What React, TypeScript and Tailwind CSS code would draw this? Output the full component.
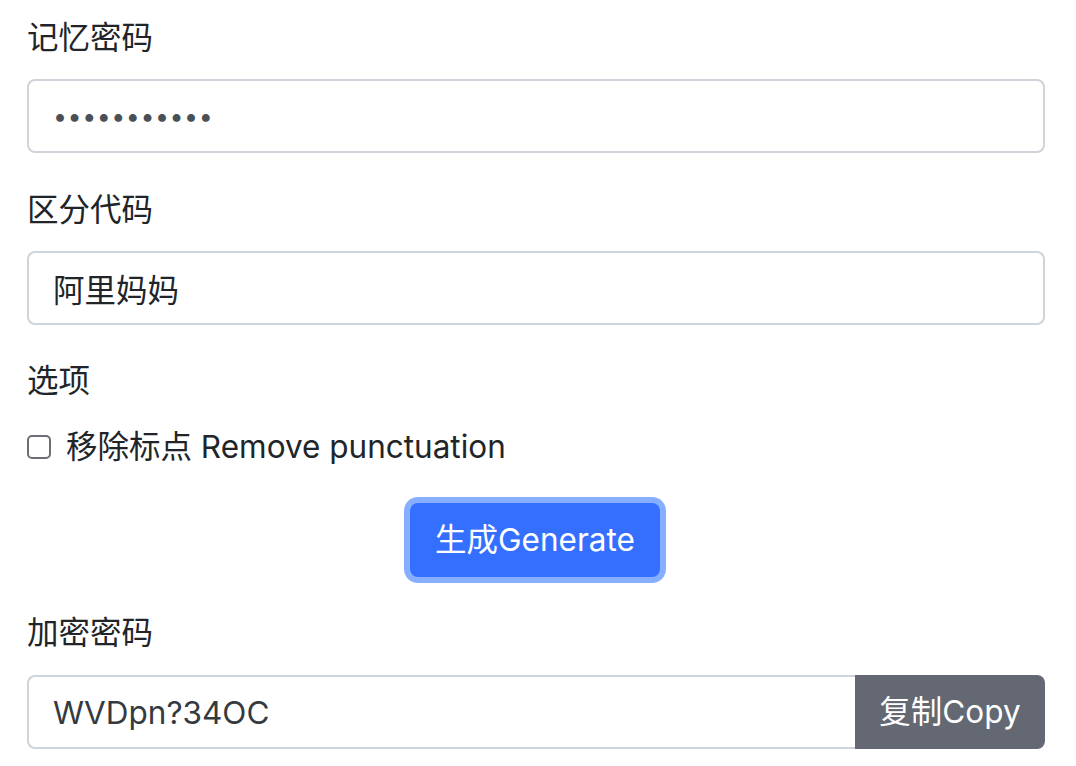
import { useState } from 'react';

const font = { fontFamily: 'Inter, "Noto Sans CJK SC", sans-serif' };

export default function App() {
  const [strip, setStrip] = useState(false);

  return (
    <div className="w-[1076px] h-[766px] bg-white text-[#212529] overflow-hidden" style={font}>
      <div className="ml-[27px] w-[1018px] pt-[15px] text-[31.5px]">
        {/* 记忆密码 */}
        <label className="block h-[46px] leading-[46px] mb-[18px]">记忆密码</label>
        <input
          type="password"
          readOnly
          defaultValue="abcdefghijk"
          className="block w-full h-[74px] px-[24px] border-2 border-[#ced4da] rounded-[8px] text-[25px] text-[#495057] tracking-[0.5px] outline-none"
        />

        {/* 区分代码 */}
        <label className="block h-[46px] leading-[46px] mt-[34px] mb-[18px]">区分代码</label>
        <input
          type="text"
          readOnly
          defaultValue="阿里妈妈"
          className="block w-full h-[74px] px-[24px] border-2 border-[#ced4da] rounded-[8px] text-[31.5px] text-[#212529] outline-none"
        />

        {/* 选项 */}
        <div className="h-[46px] leading-[46px] mt-[33px]">选项</div>
        <label
          className="flex items-center gap-[15px] h-[46px] mt-[20px] cursor-pointer"
          onClick={() => setStrip(!strip)}
        >
          <span className="w-[24px] h-[24px] border-2 border-[#6b6f74] rounded-[5px] bg-white shrink-0" />
          <span>移除标点 Remove punctuation</span>
        </label>

        <div className="flex justify-center mt-[27px]">
          <div className="p-[6px] rounded-[14px] bg-[#86b0ff] ml-[-2px]">
            <button className="h-[74px] w-[250px] rounded-[8px] bg-[#356fff] text-white text-[31.5px]">
              生成Generate
            </button>
          </div>
        </div>

        {/* 加密密码 */}
        <label className="block h-[46px] leading-[46px] mt-[27px] mb-[19px]">加密密码</label>
        <div className="flex h-[74px]">
          <input
            type="text"
            readOnly
            defaultValue="WVDpn?34OC"
            className="flex-1 min-w-0 h-full px-[24px] border-2 border-r-0 border-[#ced4da] rounded-l-[8px] text-[31.5px] text-[#343a40] outline-none"
          />
          <button className="w-[190px] h-full rounded-r-[8px] bg-[#636872] text-white text-[31.5px]">
            复制Copy
          </button>
        </div>
      </div>
    </div>
  );
}
